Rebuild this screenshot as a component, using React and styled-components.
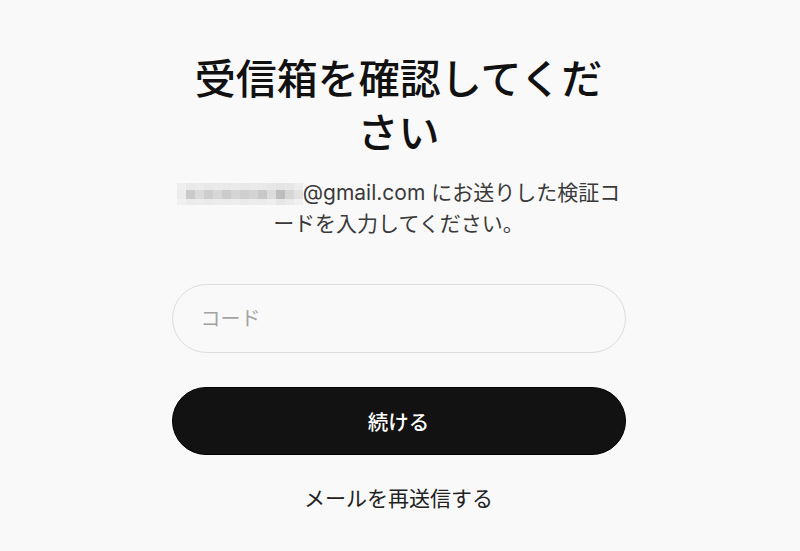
import React from "react";
import styled, { createGlobalStyle } from "styled-components";

const GlobalStyle = createGlobalStyle`
  html, body {
    margin: 0;
    padding: 0;
    background: #f9f9f9;
  }
  body {
    font-family: Inter, "Noto Sans CJK JP", "Noto Sans", sans-serif;
    color: #111;
  }
`;

// blurred e-mail address, drawn as a mosaic
const mosaic = [
  ["#efefef", "#e9e9e9", "#ebebeb", "#e8e8e8", "#eaeaea", "#e9e9e9", "#ebebeb", "#e8e8e8", "#eaeaea", "#e9e9e9", "#e7e7e7", "#e4e4e4", "#e6e6e6", "#ededed"],
  ["#ececec", "#cacaca", "#dadada", "#cdcdcd", "#d7d7d7", "#cbcbcb", "#d5d5d5", "#cfcfcf", "#d3d3d3", "#c8c8c8", "#dcdcdc", "#bdbdbd", "#d6d6d6", "#e2e2e2"],
  ["#f0f0f0", "#ebebeb", "#ededed", "#eaeaea", "#ececec", "#ebebeb", "#ededed", "#eaeaea", "#ececec", "#ebebeb", "#eeeeee", "#e6e6e6", "#eaeaea", "#f0f0f0"],
];

function Detail() {
  return (
    <Page>
      <Title>受信箱を確認してください</Title>
      <Subtitle>
        <Mosaic aria-hidden>
          <MosaicGrid>
            {mosaic.flat().map((c, i) => (
              <Cell key={i} style={{ background: c }} />
            ))}
          </MosaicGrid>
        </Mosaic>
        @gmail.com にお送りした検証コードを入力してください。
      </Subtitle>
      <CodeInput placeholder="コード" />
      <ContinueButton>続ける</ContinueButton>
      <ResendLink>メールを再送信する</ResendLink>
    </Page>
  );
}

export default function App() {
  return (
    <>
      <GlobalStyle />
      <Detail />
    </>
  );
}

const Page = styled.div`
  width: 454px;
  margin: 0 auto;
  padding: 49px 3px 0 0;
  display: flex;
  flex-direction: column;
  align-items: center;
`;
const Title = styled.h1`
  margin: 0;
  width: 420px;
  font-size: 41px;
  font-weight: 500;
  line-height: 54px;
  text-align: center;
  color: #111;
  font-family: "Noto Sans CJK JP", sans-serif;
`;
const Subtitle = styled.p`
  margin: 20px 0 0;
  width: 452px;
  font-size: 21px;
  line-height: 31px;
  text-align: center;
  color: #3a3a3a;
`;
const Mosaic = styled.span`
  display: inline-block;
  overflow: hidden;
  width: 126px;
  height: 22px;
  vertical-align: -5px;
`;
const MosaicGrid = styled.span`
  display: grid;
  grid-template-columns: repeat(14, 9px);
  grid-template-rows: 7px 9px 6px;
`;
const Cell = styled.span`
  display: block;
`;
const CodeInput = styled.input`
  box-sizing: border-box;
  margin-top: 45px;
  width: 454px;
  height: 69px;
  padding: 0 28px;
  border: 1px solid #dcdcdc;
  border-radius: 35px;
  background: #f9f9f9;
  font-family: inherit;
  font-size: 20px;
  color: #111;
  outline: none;
  &::placeholder {
    color: #a3a3a3;
  }
`;
const ContinueButton = styled.button`
  box-sizing: border-box;
  margin-top: 34px;
  width: 454px;
  height: 68px;
  border: 1px solid #000;
  border-radius: 34px;
  background: #121212;
  color: #fff;
  font-family: inherit;
  font-size: 20.5px;
  font-weight: 500;
  cursor: pointer;
`;
const ResendLink = styled.button`
  margin-top: 32px;
  padding: 0;
  border: none;
  background: none;
  font-family: inherit;
  font-size: 21px;
  line-height: 24px;
  color: #222;
  cursor: pointer;
`;
